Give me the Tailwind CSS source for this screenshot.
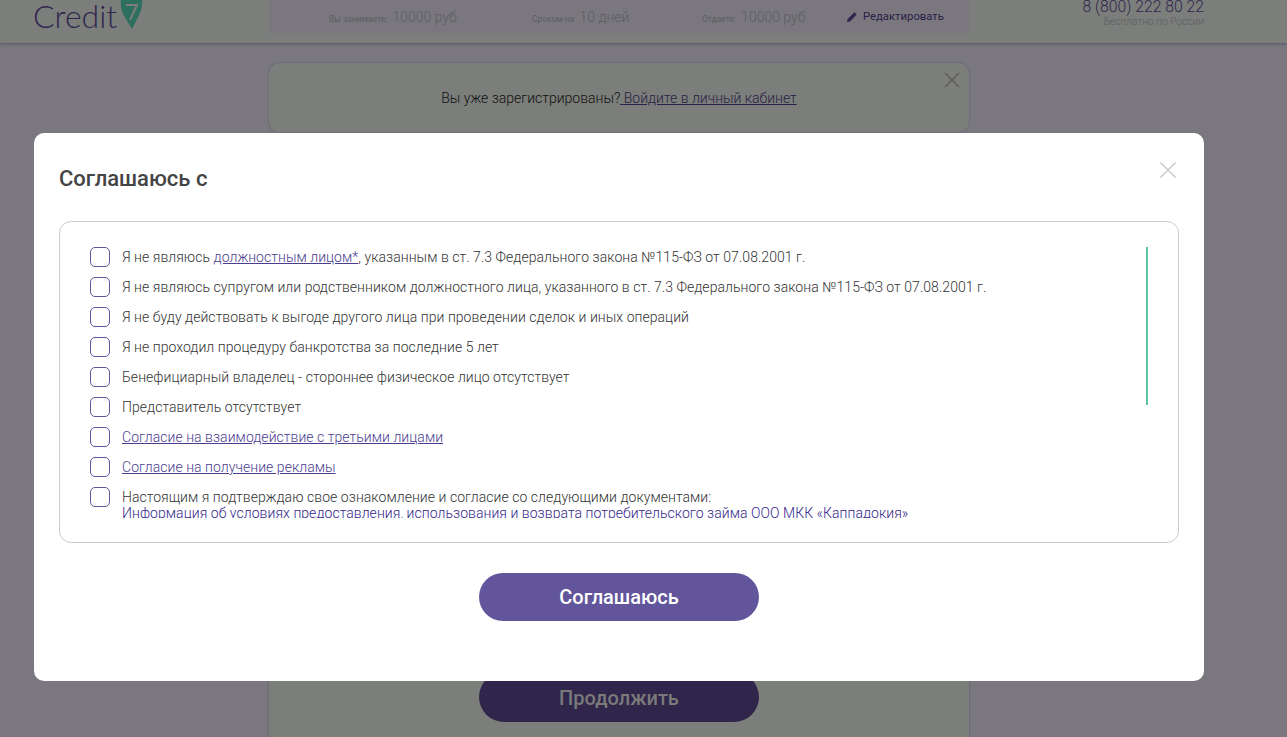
<!DOCTYPE html>
<html lang="ru">
<head>
  <meta charset="UTF-8" />
  <title>Credit7</title>
  <script src="https://cdn.jsdelivr.net/npm/@tailwindcss/browser@4"></script>
</head>
<body class="relative h-[737px] overflow-hidden bg-[#7a787e] font-['Roboto','Liberation_Sans',sans-serif] text-[#3f3f3f]">

  <!-- page behind the overlay -->
  <header class="flex h-[43px] items-start overflow-hidden bg-[#7b7e7a] shadow-[0_1px_3px_rgba(60,50,90,0.5)]">
    <div class="flex w-[269px] items-start pl-[33px]">
      <span class="text-[32px] leading-[32px] font-light text-[#30264f] font-['Lato','Roboto',sans-serif]">Credit</span>
      <svg class="ml-[3px] -mt-[1px]" width="23" height="31" viewBox="0 0 23 31">
        <path d="M1 0H22C23 8 20 15 17 20L12 30L6 20C2 14 0 8 1 0Z" fill="#2d6f5e"/>
        <path d="M6 6H17L10 21" fill="none" stroke="#7b7e7a" stroke-width="2"/>
      </svg>
    </div>
    <div class="flex h-[33px] w-[700px] items-center bg-[#7a787e] pt-[1px] text-[#5c5c61]">
      <div class="ml-[60px] flex w-[203px] items-baseline gap-[5px]"><span class="text-[8.5px]">Вы занимаете:</span><span class="text-[14px] font-light">10000 руб</span></div>
      <div class="flex w-[170px] items-baseline gap-[5px]"><span class="text-[8.5px]">Сроком на</span><span class="text-[14px] font-light">10 дней</span></div>
      <div class="flex w-[144px] items-baseline gap-[5px]"><span class="text-[8.5px]">Отдаете:</span><span class="text-[14px] font-light">10000 руб</span></div>
      <div class="flex items-center gap-[5px] text-[11.3px] text-[#2a2048]">
        <svg width="12" height="12" viewBox="0 0 12 12"><path d="M1 11L1.6 8L8.5 1.2L10.8 3.5L4 10.4Z" fill="#30264f"/></svg>
        <span>Редактировать</span>
      </div>
    </div>
    <div class="flex w-[235px] flex-col items-end">
      <span class="-mt-[2px] text-[15.75px] leading-[18px] font-light text-[#30264f]">8 (800) 222 80 22</span>
      <span class="-mt-[1px] text-[10.2px] leading-[13px] font-light text-[#5c5c61]">Бесплатно по России</span>
    </div>
  </header>

  <main class="ml-[269px] w-[700px]">
    <div class="relative mt-[20px] flex h-[69px] items-center justify-center rounded-[10px] bg-[#7b7e7a] pt-[2px] text-[14px] font-light text-[#111] shadow-[0_0_2px_rgba(70,60,110,0.6)]">
      <p>Вы уже зарегистрированы?<a class="text-[#2a2048] underline"> Войдите в личный кабинет</a></p>
      <svg class="absolute top-[9px] right-[9px]" width="16" height="16" viewBox="0 0 16 16"><path d="M1 1L15 15M15 1L1 15" stroke="#5c5c5c" stroke-width="1.5"/></svg>
    </div>
    <div class="mt-[540px] flex h-[200px] justify-center bg-[#7b7e7a] shadow-[0_0_2px_rgba(70,60,110,0.6)]">
      <div class="flex h-[50px] w-[280px] items-center justify-center rounded-full bg-[#30264b] pt-[2px] text-[20px] font-medium text-[#7a7a7a]">Продолжить</div>
    </div>
  </main>

  <!-- modal -->
  <div class="absolute top-[133px] left-[34px] flex h-[548px] w-[1170px] flex-col rounded-[10px] bg-white px-[25px]">
    <div class="relative flex h-[88px] items-center pt-[2px]">
      <h2 class="text-[22px] font-medium text-[#444]">Соглашаюсь с</h2>
      <svg class="absolute top-[29px] right-[3px]" width="16" height="16" viewBox="0 0 16 16"><path d="M0.5 0.5L15.5 15.5M15.5 0.5L0.5 15.5" stroke="#cfcfcf" stroke-width="1.6"/></svg>
    </div>
    <div class="relative h-[322px] rounded-[12px] border border-[#cccccc] pt-[25px] pl-[30px]">
      <ul class="flex h-[271px] flex-col gap-[10px] overflow-hidden text-[14px] leading-[21px] font-light tracking-[0.05px] text-[#333]">
        <li class="flex h-[20px] gap-[12px]"><span class="h-[20px] w-[20px] shrink-0 rounded-[5px] border-[1.5px] border-[#62559b]"></span><p>Я не являюсь <a class="text-[#4a3d8f] underline">должностным лицом*</a>, указанным в ст. 7.3 Федерального закона №115-ФЗ от 07.08.2001 г.</p></li>
        <li class="flex h-[20px] gap-[12px]"><span class="h-[20px] w-[20px] shrink-0 rounded-[5px] border-[1.5px] border-[#62559b]"></span><p>Я не являюсь супругом или родственником должностного лица, указанного в ст. 7.3 Федерального закона №115-ФЗ от 07.08.2001 г.</p></li>
        <li class="flex h-[20px] gap-[12px]"><span class="h-[20px] w-[20px] shrink-0 rounded-[5px] border-[1.5px] border-[#62559b]"></span><p>Я не буду действовать к выгоде другого лица при проведении сделок и иных операций</p></li>
        <li class="flex h-[20px] gap-[12px]"><span class="h-[20px] w-[20px] shrink-0 rounded-[5px] border-[1.5px] border-[#62559b]"></span><p>Я не проходил процедуру банкротства за последние 5 лет</p></li>
        <li class="flex h-[20px] gap-[12px]"><span class="h-[20px] w-[20px] shrink-0 rounded-[5px] border-[1.5px] border-[#62559b]"></span><p>Бенефициарный владелец - стороннее физическое лицо отсутствует</p></li>
        <li class="flex h-[20px] gap-[12px]"><span class="h-[20px] w-[20px] shrink-0 rounded-[5px] border-[1.5px] border-[#62559b]"></span><p>Представитель отсутствует</p></li>
        <li class="flex h-[20px] gap-[12px]"><span class="h-[20px] w-[20px] shrink-0 rounded-[5px] border-[1.5px] border-[#62559b]"></span><a class="text-[#4a3d8f] underline">Согласие на взаимодействие с третьими лицами</a></li>
        <li class="flex h-[20px] gap-[12px]"><span class="h-[20px] w-[20px] shrink-0 rounded-[5px] border-[1.5px] border-[#62559b]"></span><a class="text-[#4a3d8f] underline">Согласие на получение рекламы</a></li>
        <li class="flex gap-[12px]"><span class="h-[20px] w-[20px] shrink-0 rounded-[5px] border-[1.5px] border-[#62559b]"></span><div class="leading-[16px]"><p class="pt-[2px]">Настоящим я подтверждаю свое ознакомление и согласие со следующими документами:</p><a class="text-[#33268a]">Информация об условиях предоставления, использования и возврата потребительского займа ООО МКК «Каппадокия»</a></div></li>
      </ul>
      <div class="absolute top-[25px] right-[30px] h-[158px] w-[2px] bg-[#5fc3a5]"></div>
    </div>
    <button class="mx-auto mt-[30px] h-[48px] w-[280px] rounded-full bg-[#62559b] text-[20px] font-medium text-white">Соглашаюсь</button>
  </div>
</body>
</html>
